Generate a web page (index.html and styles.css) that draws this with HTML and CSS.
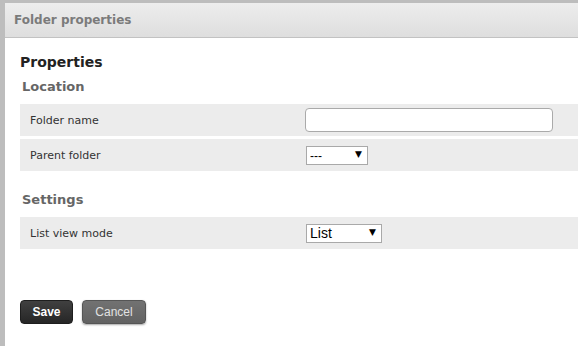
FILE: index.html
```html
<!DOCTYPE html>
<html lang="en">
<head>
  <meta charset="UTF-8" />
  <title>Folder properties</title>
  <link rel="stylesheet" href="styles.css">
</head>
<body>
  <div class="dialog">
    <div class="dialog-header">Folder properties</div>

    <form class="dialog-body">
      <h2>Properties</h2>

      <h3>Location</h3>
      <div class="row">
        <label for="folderName">Folder name</label>
        <input type="text" id="folderName" name="name" />
      </div>
      <div class="row">
        <label for="parentFolder">Parent folder</label>
        <span class="select select-small">
          <select id="parentFolder" name="parent">
            <option>---</option>
          </select>
        </span>
      </div>

      <h3 class="settings">Settings</h3>
      <div class="row">
        <label for="viewMode">List view mode</label>
        <span class="select select-wide">
          <select id="viewMode" name="view_mode">
            <option>List</option>
            <option>Thumbnails</option>
          </select>
        </span>
      </div>

      <div class="buttons">
        <button type="submit" class="btn btn-save">Save</button>
        <button type="button" class="btn btn-cancel">Cancel</button>
      </div>
    </form>
  </div>
</body>
</html>
```

FILE: styles.css
```css
html, body {
  height: 100%;
}
body {
  margin: 0;
  background: #bdbdbd;
  font-family: "DejaVu Sans", Verdana, sans-serif;
  overflow: hidden;
}
.dialog {
  margin: 3px 0 0 5px;
  height: 343px;
  background: #fff;
}
.dialog-header {
  height: 34px;
  line-height: 35px;
  padding-left: 9px;
  background: linear-gradient(#ededed, #dedede);
  border-bottom: 1px solid #c2c2c2;
  color: #7b7b7b;
  font-size: 12px;
  font-weight: bold;
}
.dialog-body {
  padding: 15px 0 0 15px;
}
h2 {
  margin: 0 0 8px;
  font-size: 14px;
  line-height: 18px;
  color: #222;
}
h3 {
  margin: 0 0 9px 2px;
  font-size: 13px;
  line-height: 16px;
  color: #666;
}
h3.settings {
  margin-top: 21px;
}
/* form rows */
.row {
  display: flex;
  align-items: center;
  height: 32px;
  margin-bottom: 3px;
  background: #ececec;
}
.row label {
  width: 275px;
  padding-left: 10px;
  font-size: 11px;
  color: #333;
}
.row input[type="text"] {
  box-sizing: border-box;
  width: 248px;
  height: 24px;
  margin: 0;
  border: 1px solid #aaa;
  border-radius: 4px;
  background: #fff;
}
.select {
  position: relative;
  display: inline-block;
  margin-left: 1px;
}
.select select {
  -webkit-appearance: none;
  appearance: none;
  box-sizing: border-box;
  height: 19px;
  margin: 0;
  padding: 0 0 0 3px;
  border: 1px solid #a9a9a9;
  border-radius: 0;
  background: #fff;
  font-family: "Liberation Sans", Arial, sans-serif;
  color: #000;
}
.select-small select {
  width: 62px;
  font-size: 12px;
}
.select-wide select {
  width: 76px;
  font-size: 14px;
}
.select::after {
  content: "\25BC";
  position: absolute;
  right: 6px;
  top: 4px;
  font-size: 9px;
  color: #000;
  pointer-events: none;
}
/* buttons */
.buttons {
  margin-top: 51px;
  display: flex;
  gap: 9px;
}
.btn {
  height: 24px;
  border-radius: 4px;
  font-family: "Liberation Sans", Arial, sans-serif;
  font-size: 12px;
  cursor: pointer;
}
.btn-save {
  width: 53px;
  border: 1px solid #1e1e1e;
  background: linear-gradient(#404040, #262626);
  color: #fff;
  font-weight: bold;
}
.btn-cancel {
  width: 64px;
  border: 1px solid #555;
  background: linear-gradient(#727272, #626262);
  color: #e2e2e2;
  box-shadow: 0 1px 2px rgba(0,0,0,0.35);
}
```
